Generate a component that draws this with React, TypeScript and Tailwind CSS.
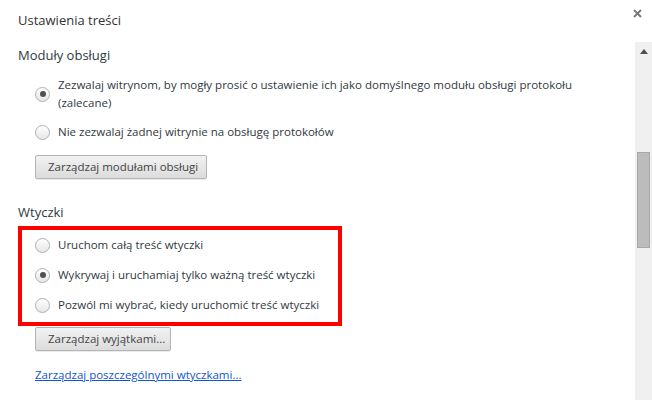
const font = { fontFamily: '"Open Sans", "Noto Sans", sans-serif' };

const Radio = ({ checked }: { checked?: boolean }) => (
  <span className="flex h-[15px] w-[15px] shrink-0 items-center justify-center rounded-full border border-[#b0b0b0] bg-gradient-to-b from-[#ffffff] to-[#e6e6e6] shadow-[inset_0_1px_1px_rgba(255,255,255,0.8)]">
    {checked && <span className="h-[6px] w-[6px] rounded-full bg-[#505050]" />}
  </span>
);

const Button = ({ children, w }: { children: React.ReactNode; w: string }) => (
  <button
    className={`${w} flex h-[24px] items-center whitespace-nowrap rounded-[2px] border border-[#b4b4b4] bg-gradient-to-b from-[#f2f2f2] to-[#dcdcdc] pl-[12px] text-[11.5px] text-[#444] shadow-[0_1px_0_rgba(0,0,0,0.08)]`}
  >
    {children}
  </button>
);

export default function App() {
  return (
    <div className="h-[400px] w-[652px] overflow-hidden bg-white text-[#303942]" style={font}>
      <div className="flex h-[42px] items-start justify-between">
        <div className="pl-[18px] pt-[10px] text-[13px] leading-[20px] text-[#333]">Ustawienia treści</div>
        <svg width="9" height="9" viewBox="0 0 9 9" className="mr-[10px] mt-[9px]">
          <path d="M1 1 L8 8 M8 1 L1 8" stroke="#7a7a7a" strokeWidth="2" />
        </svg>
      </div>
      <div className="flex h-[358px]">
        <div className="flex-1 pt-[3px] text-[11.5px]">
          <div className="pl-[18px] text-[13px] leading-[20px]">Moduły obsługi</div>
          <div className="mt-[11px] flex flex-col pl-[35px]">
            <label className="flex items-center gap-[8px] leading-[18px]">
              <Radio checked />
              <span>
                Zezwalaj witrynom, by mogły prosić o ustawienie ich jako domyślnego modułu obsługi protokołu
                <br />
                (zalecane)
              </span>
            </label>
            <label className="mt-[11px] flex items-center gap-[8px] leading-[18px]">
              <Radio />
              <span>Nie zezwalaj żadnej witrynie na obsługę protokołów</span>
            </label>
            <div className="mt-[14px]">
              <Button w="w-[172px]">Zarządzaj modułami obsługi</Button>
            </div>
          </div>
          <div className="mt-[23px] pl-[18px] text-[13px] leading-[20px]">Wtyczki</div>
          <div className="ml-[18px] mt-[4px] flex w-[324px] flex-col border-4 border-[#ff0000] pb-[2px] pl-[13px]">
            <label className="flex h-[30px] items-center gap-[8px]">
              <Radio />
              <span>Uruchom całą treść wtyczki</span>
            </label>
            <label className="flex h-[30px] items-center gap-[8px]">
              <Radio checked />
              <span>Wykrywaj i uruchamiaj tylko ważną treść wtyczki</span>
            </label>
            <label className="flex h-[30px] items-center gap-[8px]">
              <Radio />
              <span>Pozwól mi wybrać, kiedy uruchomić treść wtyczki</span>
            </label>
          </div>
          <div className="mt-[1px] pl-[35px]">
            <Button w="w-[136px]">Zarządzaj wyjątkami...</Button>
            <a className="mt-[15px] block leading-[18px] text-[#1155cc] underline">
              Zarządzaj poszczególnymi wtyczkami...
            </a>
          </div>
        </div>
        <div className="flex w-[17px] flex-col items-center bg-[#f0f0f0]">
          <svg width="8" height="5" viewBox="0 0 8 5" className="mt-[7px]">
            <path d="M0 5 L4 0 L8 5 Z" fill="#505050" />
          </svg>
          <div className="mt-[98px] h-[96px] w-[13px] border border-[#a8a8a8] bg-[#bcbcbc]" />
        </div>
      </div>
    </div>
  );
}
